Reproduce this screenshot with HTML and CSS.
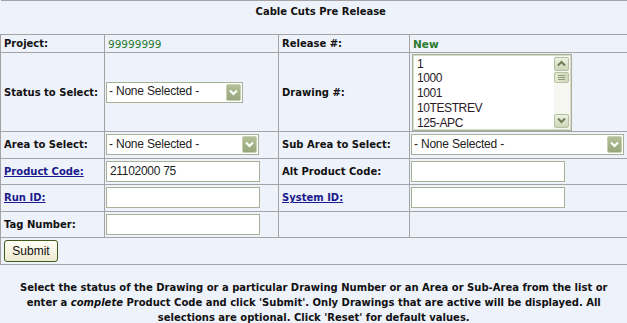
FILE: index.html
```
<!DOCTYPE html>
<html lang="en">
<head>
  <meta charset="UTF-8" />
  <title>Cable Cuts Pre Release</title>
  <link rel="stylesheet" href="styles.css">
</head>
<body>
  <table class="form">
    <colgroup>
      <col class="c1"><col class="c2"><col class="c3"><col class="c4">
    </colgroup>
    <tr class="title-row">
      <td colspan="4">Cable Cuts Pre Release</td>
    </tr>
    <tr class="row-project">
      <th>Project:</th>
      <td class="value">99999999</td>
      <th>Release #:</th>
      <td class="value new">New</td>
    </tr>
    <tr class="row-status">
      <th>Status to Select:</th>
      <td>
        <div class="select sel-status">
          <span class="sel-text">- None Selected -</span>
          <span class="sel-arrow"><svg width="9" height="7" viewBox="0 0 9 7"><path d="M1 1.5 L4.5 5 L8 1.5" fill="none" stroke="#fff" stroke-width="2"/></svg></span>
        </div>
      </td>
      <th>Drawing #:</th>
      <td>
        <div class="listbox">
          <ul class="list-items">
            <li>1</li>
            <li>1000</li>
            <li>1001</li>
            <li>10TESTREV</li>
            <li>125-APC</li>
          </ul>
          <div class="scrollbar">
            <span class="sb-btn"><svg width="9" height="7" viewBox="0 0 9 7"><path d="M1 5.5 L4.5 2 L8 5.5" fill="none" stroke="#6e7d55" stroke-width="2"/></svg></span>
            <span class="sb-thumb"><i></i><i></i><i></i></span>
            <span class="sb-track"></span>
            <span class="sb-btn"><svg width="9" height="7" viewBox="0 0 9 7"><path d="M1 1.5 L4.5 5 L8 1.5" fill="none" stroke="#6e7d55" stroke-width="2"/></svg></span>
          </div>
        </div>
      </td>
    </tr>
    <tr class="row-std">
      <th>Area to Select:</th>
      <td>
        <div class="select sel-area">
          <span class="sel-text">- None Selected -</span>
          <span class="sel-arrow"><svg width="9" height="7" viewBox="0 0 9 7"><path d="M1 1.5 L4.5 5 L8 1.5" fill="none" stroke="#fff" stroke-width="2"/></svg></span>
        </div>
      </td>
      <th>Sub Area to Select:</th>
      <td>
        <div class="select sel-sub">
          <span class="sel-text">- None Selected -</span>
          <span class="sel-arrow"><svg width="9" height="7" viewBox="0 0 9 7"><path d="M1 1.5 L4.5 5 L8 1.5" fill="none" stroke="#fff" stroke-width="2"/></svg></span>
        </div>
      </td>
    </tr>
    <tr class="row-std">
      <th><a href="#">Product Code:</a></th>
      <td><input class="text-input" type="text" value="21102000 75"></td>
      <th>Alt Product Code:</th>
      <td><input class="text-input" type="text"></td>
    </tr>
    <tr class="row-std">
      <th><a href="#">Run ID:</a></th>
      <td><input class="text-input" type="text"></td>
      <th><a href="#">System ID:</a></th>
      <td><input class="text-input" type="text"></td>
    </tr>
    <tr class="row-std">
      <th>Tag Number:</th>
      <td><input class="text-input" type="text"></td>
      <th></th>
      <td></td>
    </tr>
    <tr class="row-submit">
      <td colspan="4"><button class="btn-submit">Submit</button></td>
    </tr>
    <tr class="row-note">
      <td colspan="4">
        Select the status of the Drawing or a particular Drawing Number or an Area or Sub-Area from the list or<br>
        enter a <em>complete</em> Product Code and click 'Submit'. Only Drawings that are active will be displayed. All<br>
        selections are optional. Click 'Reset' for default values.
      </td>
    </tr>
  </table>
</body>
</html>
```

FILE: styles.css
```
html, body {
  margin: 0;
  padding: 0;
  background: #eef2fb;
  font-family: "DejaVu Sans", Verdana, sans-serif;
  font-size: 10px;
  color: #111;
}

.form {
  width: 627px;
  border-collapse: collapse;
  table-layout: fixed;
}

.c1 { width: 104px; }
.c2 { width: 174px; }
.c3 { width: 131px; }
.c4 { width: 218px; }

.form td, .form th {
  border: 1px solid #a4a4a4;
  padding: 0 0 0 1px;
  vertical-align: middle;
  text-align: left;
}

.form th {
  font-weight: bold;
  padding-left: 3px;
  white-space: nowrap;
}

.form th a {
  color: #1a1a8a;
}

.title-row td {
  height: 34px;
  border-left: none;
  text-align: center;
  vertical-align: top;
  padding: 5px 0 0 14px;
  font-weight: bold;
  box-sizing: border-box;
}

.row-project th, .row-project td {
  height: 17px;
}

.value {
  color: #2a7a2e;
  padding-left: 3px !important;
  font-size: 10.5px;
}

.value.new {
  font-weight: bold;
}

.row-status th, .row-status td {
  height: 78px;
}

.row-std th, .row-std td {
  height: 25.5px;
}

/* fake xp-style dropdowns */
.select {
  display: flex;
  align-items: center;
  justify-content: space-between;
  box-sizing: border-box;
  height: 21px;
  border: 1px solid #a8b095;
  background: #fff;
  font-family: "Liberation Sans", Arial, sans-serif;
  font-size: 12px;
  color: #222;
  padding: 0 1px 0 2px;
}

.sel-status { width: 137px; }
.sel-area { width: 153px; }
.sel-sub { width: 213px; }

.sel-text {
  white-space: nowrap;
  margin-top: -2px;
  letter-spacing: -0.2px;
}

.sel-arrow {
  display: flex;
  align-items: center;
  justify-content: center;
  width: 15px;
  height: 17px;
  box-sizing: border-box;
  border: 1px solid #c9d1b5;
  border-radius: 2px;
  background: linear-gradient(#b2bf98, #98a67c);
}

.listbox {
  display: flex;
  box-sizing: border-box;
  width: 160px;
  height: 77px;
  margin-left: 1px;
  border: 1px solid #a8b095;
  padding: 1px;
  background: #fff;
  box-shadow: inset 0 0 0 1px #d9dccd;
}

.list-items {
  flex: 1;
  list-style: none;
  margin: 0;
  padding: 1px 0 0 3px;
  font-family: "Liberation Sans", Arial, sans-serif;
  font-size: 12px;
  line-height: 14.8px;
  color: #2a1a2a;
  overflow: hidden;
}

.list-items li {
  letter-spacing: -0.4px;
}

.scrollbar {
  display: flex;
  flex-direction: column;
  width: 15px;
  background: #f7f7f2;
  padding: 1px 1px 1px 0;
}

.sb-btn {
  display: flex;
  align-items: center;
  justify-content: center;
  height: 14px;
  box-sizing: border-box;
  border: 1px solid #b7c1a0;
  border-radius: 2px;
  background: linear-gradient(#eef1e2, #cdd6b8);
}

.sb-thumb {
  display: flex;
  flex-direction: column;
  justify-content: center;
  align-items: center;
  gap: 1px;
  height: 11px;
  margin-top: 1px;
  box-sizing: border-box;
  border: 1px solid #b7c1a0;
  border-radius: 2px;
  background: linear-gradient(90deg, #e4e9d4, #cfd8bb);
}

.sb-thumb i {
  display: block;
  width: 7px;
  height: 1px;
  background: #8f9c74;
}

.sb-track {
  flex: 1;
}

.text-input {
  display: block;
  box-sizing: border-box;
  width: 154px;
  height: 21px;
  margin: 0;
  border: 1px solid #a8b095;
  background: #fff;
  font-family: "Liberation Sans", Arial, sans-serif;
  font-size: 12px;
  color: #222;
  padding: 0 3px;
  letter-spacing: -0.3px;
}

.row-submit td {
  height: 26px;
  padding-left: 3px;
}

.btn-submit {
  display: block;
  width: 54px;
  height: 22px;
  border: 1px solid #3f5a1a;
  border-radius: 3px;
  background: linear-gradient(#fffff6, #ede9cf);
  font-family: "Liberation Sans", Arial, sans-serif;
  font-size: 12px;
  color: #111;
  padding: 0;
}

.row-note td {
  height: 59px;
  border-left: none;
  text-align: center;
  vertical-align: top;
  font-weight: bold;
  line-height: 15px;
  padding: 15px 4px 0;
  white-space: nowrap;
  box-sizing: border-box;
}

.row-note em {
  font-style: italic;
}
```
